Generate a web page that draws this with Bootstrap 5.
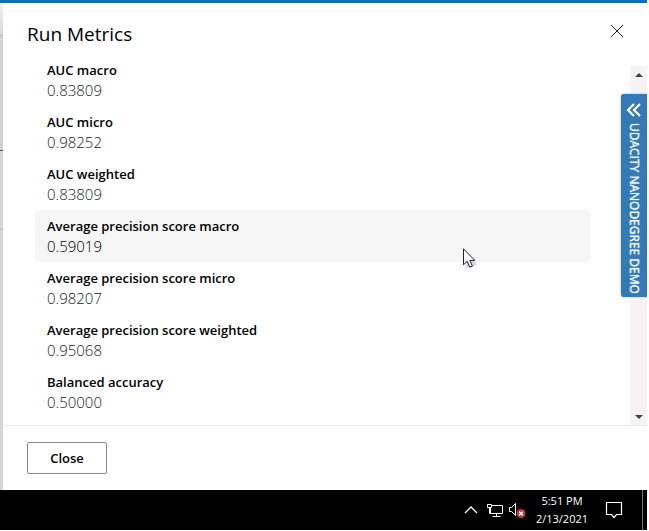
<!DOCTYPE html>
<html lang="en">
<head>
<meta charset="utf-8">
<meta name="viewport" content="width=device-width, initial-scale=1">
<title>Run Metrics</title>
<link href="https://cdn.jsdelivr.net/npm/bootstrap@5.3.0/dist/css/bootstrap.min.css" rel="stylesheet">
<style>
body { font-family: "Open Sans", "Noto Sans", sans-serif; color: #000; background: #fff; }
.screen { padding: 0 2px 1px 0; }
.accent { height: 3px; background: #0a6fc9; }
.backdrop-strip { width: 3px; background: linear-gradient(#f0f0f0, #d8d8d8 32px, #b8b8b8 32px, #b8b8b8 33px, #d2d2d2 33px, #d2d2d2 147px, #555 147px, #555 148px, #d6d6d6 148px, #d6d6d6 226px, #bbb 226px, #bbb 227px, #d6d6d6 227px); }
.panel-head { height: 63px; padding: 14px 16px 0 24px; }
.panel-title { font-size: 19px; line-height: 34px; }
.icon-button { width: 28px; height: 28px; }
.metrics { padding: 0 40px 0 32px; }
.metric-list { margin-top: -12px; }
.metric { height: 52px; padding: 6px 12px; font-size: 13px; line-height: 20px; }
.metric dt { font-weight: 600; }
.metric dd { font-weight: 300; font-size: 15px; color: #222; }
.metric.active { background: #f6f6f6; }
.metric.active dd { color: #000; }
.scroll-track { width: 17px; background: #f6f2f6; padding: 6px 0 5px; }
.side-tab { top: 91px; right: 0; width: 26px; height: 203px; padding: 8px 0 0; background: #337ab7; color: #fff; border-radius: 3px 0 0 3px; box-shadow: 0 0 2px #8aa; gap: 5px; }
.side-tab span { writing-mode: vertical-rl; font-size: 12px; line-height: 18px; font-weight: 500; white-space: nowrap; text-shadow: 0 0 1px #fff; }
.panel-foot { height: 65px; padding: 0 24px; border-top: 1px solid #eaeaea; }
.close-button { width: 80px; height: 32px; border: 1px solid #8a8886; border-radius: 2px; font-size: 13px; line-height: 20px; font-weight: 600; background: #fff; color: #000; }
.pointer { left: 460px; top: 245px; }
.taskbar { height: 40px; background: #000; color: #fff; }
.clock { width: 72px; font-size: 11px; line-height: 18px; }
.notices { margin: 0 19px 0 7px; }
.desktop-edge { width: 5px; border-left: 1px solid #777; }
</style>
<script src="https://cdn.jsdelivr.net/npm/bootstrap@5.3.0/dist/js/bootstrap.bundle.min.js"></script>
</head>
<body>
<div class="screen vh-100 d-flex flex-column overflow-hidden">
  <div class="accent flex-shrink-0"></div>
  <div class="d-flex flex-fill overflow-hidden position-relative">
    <div class="backdrop-strip flex-shrink-0"></div>
    <main class="d-flex flex-column flex-fill position-relative overflow-hidden">
      <header class="panel-head d-flex align-items-start justify-content-between flex-shrink-0">
        <h1 class="panel-title fw-normal m-0">Run Metrics</h1>
        <button class="icon-button border-0 bg-transparent p-0 d-flex align-items-center justify-content-center" type="button" aria-label="Close panel">
          <svg width="14" height="14" viewBox="0 0 14 14" stroke="#222" fill="none"><path d="M1 1l12 12M13 1L1 13"/></svg>
        </button>
      </header>
      <div class="d-flex flex-fill overflow-hidden">
        <div class="metrics flex-fill overflow-hidden">
          <dl class="metric-list mb-0">
            <div class="metric"><dt>AUC macro</dt><dd class="m-0">0.83809</dd></div>
            <div class="metric"><dt>AUC micro</dt><dd class="m-0">0.98252</dd></div>
            <div class="metric"><dt>AUC weighted</dt><dd class="m-0">0.83809</dd></div>
            <div class="metric active"><dt>Average precision score macro</dt><dd class="m-0">0.59019</dd></div>
            <div class="metric"><dt>Average precision score micro</dt><dd class="m-0">0.98207</dd></div>
            <div class="metric"><dt>Average precision score weighted</dt><dd class="m-0">0.95068</dd></div>
            <div class="metric"><dt>Balanced accuracy</dt><dd class="m-0">0.50000</dd></div>
          </dl>
        </div>
        <div class="scroll-track d-flex flex-column justify-content-between align-items-center flex-shrink-0">
          <svg width="8" height="6" viewBox="0 0 8 6" fill="#444"><path d="M0 5h8L4 1z"/></svg>
          <svg width="8" height="6" viewBox="0 0 8 6" fill="#444"><path d="M0 1h8L4 5z"/></svg>
        </div>
      </div>
      <footer class="panel-foot d-flex align-items-center flex-shrink-0">
        <button class="close-button p-0" type="button">Close</button>
      </footer>
      <svg class="pointer position-absolute" width="16" height="24" viewBox="0 0 16 24"><path d="M3 5l11 11-3 3-3-1-5 3z" fill="#000" opacity=".15"/><path d="M.5.8v16l3.700-3.500 2.600 5.900 2.600-1.100-2.600-5.700h5z" fill="#fff" stroke="#1c2030"/></svg>
    </main>
    <button class="side-tab position-absolute border-0 d-flex flex-column align-items-center" type="button">
      <svg class="flex-shrink-0" width="16" height="16" viewBox="0 0 16 16" fill="none" stroke="#fff" stroke-width="2.2"><path d="M8 2L2 8l6 6M14 2L8 8l6 6"/></svg>
      <span>UDACITY NANODEGREE DEMO</span>
    </button>
  </div>
  <div class="taskbar d-flex align-items-center justify-content-end flex-shrink-0">
    <svg class="me-2" width="14" height="10" viewBox="0 0 14 10" fill="none" stroke="#fff" stroke-width="1.3"><path d="M1 8l6-6 6 6"/></svg>
    <svg class="me-1" width="18" height="16" viewBox="0 0 18 16" fill="none" stroke="#fff"><path d="M5.500 3.500h11v8h-12V6M10.500 11.500v3M6.500 14.500h8M1.500 2.500h4v3h-4zM3.500 5.500v6h1"/></svg>
    <svg width="18" height="18" viewBox="0 0 18 18" fill="none" stroke="#fff"><path d="M1.500 6.500h2l4-4v12l-4-4h-2z"/><circle cx="13" cy="12.500" r="4.500" fill="#c9353d" stroke="none"/><path d="M11.200 10.700l3.600 3.600M14.800 10.700l-3.600 3.600" stroke-width="1.300"/></svg>
    <div class="clock text-center">5:51 PM<br>2/13/2021</div>
    <svg class="notices" width="18" height="18" viewBox="0 0 18 18" fill="none" stroke="#fff" stroke-width="1.2"><path d="M1.500 1.500h15v12h-5l-2.500 3-2.500-3h-5z"/></svg>
    <div class="desktop-edge align-self-stretch"></div>
  </div>
</div>
</body>
</html>
